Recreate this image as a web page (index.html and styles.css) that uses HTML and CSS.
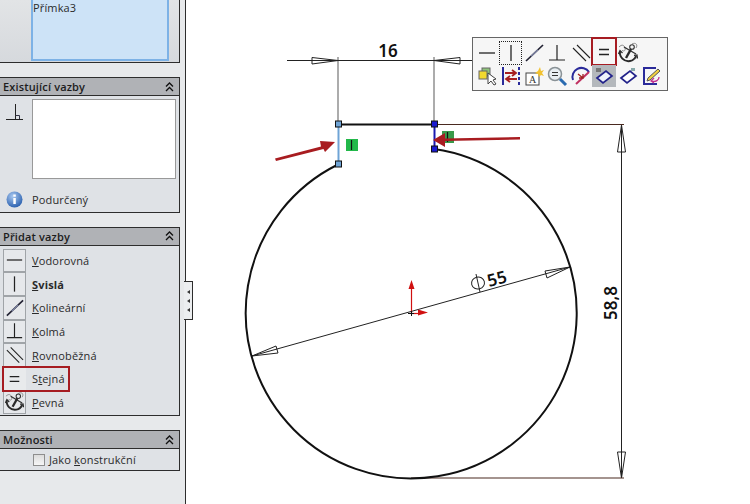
FILE: index.html
```html
<!DOCTYPE html>
<html lang="cs">
<head>
<meta charset="utf-8">
<title>Skica</title>
<link rel="stylesheet" href="styles.css">
</head>
<body>
<svg class="defs" width="0" height="0" aria-hidden="true">
  <symbol id="i-chev" viewBox="0 0 9 10"><path d="M1 4.500L4.500 1L8 4.500M1 9L4.500 5.500L8 9" fill="none" stroke="#111" stroke-width="1.300"/></symbol>
  <symbol id="i-h" viewBox="0 0 22 22"><path d="M3 11H19" stroke="#222" stroke-width="1.300" fill="none"/></symbol>
  <symbol id="i-v" viewBox="0 0 22 22"><path d="M11 3V19" stroke="#222" stroke-width="1.300" fill="none"/></symbol>
  <symbol id="i-c" viewBox="0 0 22 22"><path d="M3 19L20 3" stroke="#223" stroke-width="1.700" fill="none"/><path d="M8 14.300L15 7.700" stroke="#7f86a8" stroke-width="1.200" fill="none"/></symbol>
  <symbol id="i-p" viewBox="0 0 22 22"><path d="M11 3V18M3 18H19" stroke="#222" stroke-width="1.200" fill="none"/></symbol>
  <symbol id="i-l" viewBox="0 0 22 22"><path d="M3 6L16 19M7 3L20 16" stroke="#222" stroke-width="1.100" fill="none"/></symbol>
  <symbol id="i-e" viewBox="0 0 22 22"><path d="M6 8.500H16M6 13.500H16" stroke="#222" stroke-width="1.500" fill="none"/></symbol>
  <symbol id="i-a" viewBox="0 0 22 22">
    <g fill="none">
      <path d="M2 5C5 2 7 3 8 6C9 9 6 10 5 8M15 2C19 0 21 3 19 6M17 13C20 12 21 16 18 17" stroke="#8a8a8a" stroke-width="1"/>
      <circle cx="15" cy="5" r="2.300" stroke="#333" stroke-width="1.100"/>
      <path d="M7 5L19 12" stroke="#333" stroke-width="1.400"/>
      <path d="M14 7L9 16" stroke="#2a2a2a" stroke-width="2.400"/>
      <path d="M3 9C2 15 7 20 13 19C16 18.500 18 16.500 19 14" stroke="#2a2a2a" stroke-width="2"/>
      <path d="M1.500 12L3 8.500L5.500 11M17 13.500L20 13L20.500 16.500" stroke="#2a2a2a" stroke-width="1.200"/>
    </g>
  </symbol>
</svg>
<div class="app">
  <aside class="side">
    <section class="sec sec-top">
      <div class="sel-list">Přímka3</div>
    </section>
    <section class="sec">
      <header class="sec-head"><span>Existující vazby</span><svg class="chev" width="9" height="10"><use href="#i-chev"/></svg></header>
      <div class="sec-body body-exist">
        <div class="exist-row">
          <svg class="exist-icon" width="18" height="18" viewBox="0 0 18 18"><path d="M9.500 0V15M0 15.500H17" stroke="#222" stroke-width="1" fill="none"/><path d="M9.500 11.500H13.500V15" stroke="#334" stroke-width="1" fill="none"/></svg>
          <div class="exist-box"></div>
        </div>
        <div class="status">
          <svg width="17" height="17" viewBox="0 0 17 17"><defs><radialGradient id="g" cx=".4" cy=".3" r=".8"><stop offset="0" stop-color="#a8c8f0"/><stop offset="1" stop-color="#1d55a8"/></radialGradient></defs><circle cx="8.500" cy="8.500" r="8" fill="url(#g)"/><rect x="7.300" y="7" width="2.500" height="6" fill="#fff"/><rect x="7.300" y="3.500" width="2.500" height="2.200" fill="#fff"/></svg>
          <span>Podurčený</span>
        </div>
      </div>
    </section>
    <section class="sec">
      <header class="sec-head"><span>Přidat vazby</span><svg class="chev" width="9" height="10"><use href="#i-chev"/></svg></header>
      <div class="sec-body body-add">
        <div class="rel"><span class="btn"><svg width="22" height="22"><use href="#i-h"/></svg></span><span><u>V</u>odorovná</span></div>
        <div class="rel rel-active"><span class="btn"><svg width="22" height="22"><use href="#i-v"/></svg></span><span><u>S</u>vislá</span></div>
        <div class="rel"><span class="btn"><svg width="22" height="22"><use href="#i-c"/></svg></span><span><u>K</u>olineární</span></div>
        <div class="rel"><span class="btn"><svg width="22" height="22"><use href="#i-p"/></svg></span><span><u>K</u>olmá</span></div>
        <div class="rel"><span class="btn"><svg width="22" height="22"><use href="#i-l"/></svg></span><span><u>R</u>ovnoběžná</span></div>
        <div class="rel rel-mark"><span class="btn"><svg width="22" height="22"><use href="#i-e"/></svg></span><span>S<u>t</u>ejná</span></div>
        <div class="rel"><span class="btn"><svg width="22" height="22"><use href="#i-a"/></svg></span><span><u>P</u>evná</span></div>
      </div>
    </section>
    <section class="sec">
      <header class="sec-head"><span>Možnosti</span><svg class="chev" width="9" height="10"><use href="#i-chev"/></svg></header>
      <div class="sec-body body-opt">
        <span class="check"></span><span>Jako <u>k</u>onstrukční</span>
      </div>
    </section>
    <div class="flip"><i></i><i></i><i></i></div>
  </aside>
  <main class="canvas">
    <svg class="sketch" viewBox="186 0 564 504" width="564" height="504">
      <g fill="none" stroke="#808080" stroke-width="1.300">
        <path d="M338 57V124M434 57V124"/>
      </g>
      <g fill="none" stroke="#222" stroke-width="1">
        <path d="M287 60.500H480"/>
        <path d="M312 57.500L338 60.500L312 64Z"/>
        <path d="M460 57.500L434 60.500L460 64Z"/>
        <path d="M621.500 125V478"/>
        <path d="M617.500 152L621.500 125L625.500 152Z"/>
        <path d="M617.500 452L621.500 478L625.500 452Z"/>
        <path d="M252 356L570 267"/>
        <path d="M276 346L252 356L278 353Z"/>
        <path d="M545 271L570 267L547 278Z"/>
        <ellipse cx="478" cy="283" rx="6.500" ry="6" transform="rotate(-15 478 283)"/>
        <path d="M476 274L480 292"/>
      </g>
      <path d="M434 124.500H624M411 478H624" fill="none" stroke="#4a2a20" stroke-width="1.200"/>
      <path d="M338 164.500A165.500 165.500 0 1 0 434 149" fill="none" stroke="#111" stroke-width="2"/>
      <path d="M338 124.500H434" fill="none" stroke="#111" stroke-width="2"/>
      <path d="M338.500 124V164" fill="none" stroke="#6fa4d6" stroke-width="2"/>
      <path d="M434.500 124V149" fill="none" stroke="#1a1ab0" stroke-width="2"/>
      <g stroke="#111" stroke-width="1">
        <rect x="335.500" y="121" width="6" height="6" fill="#6fa4d6"/>
        <rect x="335.500" y="161" width="6" height="6" fill="#6fa4d6"/>
        <rect x="431.500" y="121" width="6" height="6" fill="#1a1ad0"/>
        <rect x="431.500" y="146" width="6" height="6" fill="#1a1ad0"/>
      </g>
      <rect x="346" y="139" width="12" height="12" fill="#22b84a"/>
      <path d="M351.500 140V150" stroke="#111" stroke-width="1.200"/>
      <rect x="442" y="131" width="12" height="12" fill="#3a9a4a"/>
      <path d="M447.500 132V142" stroke="#111" stroke-width="1.200"/>
      <g fill="none" stroke="#d01010">
        <path d="M411.500 313V286" stroke-width="1.200"/>
        <path d="M411 313.500H420" stroke-width="1.200"/>
      </g>
      <path d="M411.500 280L408.500 289H414.500ZM428 312.500L418 309.500V315.500Z" fill="#d01010"/>
      <path d="M408 313.500H414M411.500 311V316" stroke="#111" stroke-width="1" fill="none"/>
      <g fill="#a81c20">
        <path d="M275 158.500L321 146.500L320 141L335 142L325 152L323.500 149L276 161Z"/>
        <path d="M520 137V139.500L445 141V147L433 140L445 133V138.500Z"/>
      </g>
      <text class="dim" x="388" y="57" text-anchor="middle">16</text>
      <text class="dim" transform="translate(489 287) rotate(-15)">55</text>
      <text class="dim" transform="translate(617 320) rotate(-90)">58,8</text>
    </svg>
    <div class="bar">
      <span class="tool"><svg width="22" height="22"><use href="#i-h"/></svg></span>
      <span class="tool tool-focus"><svg width="22" height="22"><use href="#i-v"/></svg></span>
      <span class="tool"><svg width="22" height="22"><use href="#i-c"/></svg></span>
      <span class="tool"><svg width="22" height="22"><use href="#i-p"/></svg></span>
      <span class="tool"><svg width="22" height="22"><use href="#i-l"/></svg></span>
      <span class="tool tool-mark"><svg width="22" height="22"><use href="#i-e"/></svg></span>
      <span class="tool"><svg width="22" height="22"><use href="#i-a"/></svg></span>
      <span class="tool"></span>
      <span class="tool"><svg width="22" height="22" viewBox="0 0 22 22"><rect x="6" y="3" width="8" height="8" fill="#8fc47a" stroke="#666"/><rect x="3" y="6" width="8" height="8" fill="#f2d92e" stroke="#666"/><path d="M12 8L12 19L15 16L18 20L20 19L17 15L20 14Z" fill="#fff" stroke="#444"/></svg></span>
      <span class="tool"><svg width="22" height="22" viewBox="0 0 22 22"><path d="M3 2V20" stroke="#2a2a9a" stroke-width="2"/><path d="M19 2V20" stroke="#2a2a9a" stroke-width="2" stroke-dasharray="3 2"/><path d="M5 8H15M12 5L16 8L12 11M17 14H7M10 11L6 14L10 17" stroke="#a82020" stroke-width="1.800" fill="none"/></svg></span>
      <span class="tool"><svg width="22" height="22" viewBox="0 0 22 22"><rect x="3" y="8" width="13" height="12" fill="#fff" stroke="#444"/><text class="tool-a" x="6" y="18">A</text><path d="M17 2L18 6L21 5L19 8L21 11L18 10L16 12L15 9L12 8L15 6Z" fill="#f2c230"/></svg></span>
      <span class="tool"><svg width="22" height="22" viewBox="0 0 22 22"><circle cx="9" cy="9" r="6.500" fill="#e8eef2" stroke="#8a9296" stroke-width="1.500"/><path d="M6 7.500H12M6 10.500H12" stroke="#333" stroke-width="1.200"/><path d="M14 14L20 20" stroke="#2a6ab0" stroke-width="3"/></svg></span>
      <span class="tool"><svg width="22" height="22" viewBox="0 0 22 22"><path d="M3 15A9 9 0 0 1 19 7" fill="none" stroke="#2a2a9a" stroke-width="2"/><path d="M6 19L19 7" stroke="#c03060" stroke-width="2"/><path d="M8 9L13 13M13 9V13H9" stroke="#a02020" stroke-width="1.300" fill="none"/></svg></span>
      <span class="tool tool-on"><svg width="22" height="22" viewBox="0 0 22 22"><path d="M4 13L13 6L19 11L10 18Z" fill="#eef2fa" stroke="#22228a" stroke-width="1.700"/><rect x="3" y="3" width="5" height="4" fill="#777"/></svg></span>
      <span class="tool"><svg width="22" height="22" viewBox="0 0 22 22"><path d="M4 13L13 6L19 11L10 18Z" fill="#fff" stroke="#22228a" stroke-width="1.700"/><rect x="14" y="3" width="4" height="3" fill="#8aa"/></svg></span>
      <span class="tool"><svg width="22" height="22" viewBox="0 0 22 22"><path d="M16 3H4V19H17" fill="none" stroke="#2a2a9a" stroke-width="2"/><path d="M8 13L18 4L20 6L10 15L7 16Z" fill="#f2d040" stroke="#555"/><path d="M19 12A5 4 0 0 1 12 16M14 13L11 16L14 18" fill="none" stroke="#c03090" stroke-width="1.300"/></svg></span>
    </div>
  </main>
</div>
</body>
</html>
```
FILE: styles.css
```css
html, body {
  margin: 0;
  padding: 0;
  width: 750px;
  height: 504px;
  overflow: hidden;
  background: #fff;
  font-family: "Open Sans", "Noto Sans", sans-serif;
  font-size: 11px;
  letter-spacing: 0.15px;
  color: #2a2a2a;
}
.defs { position: absolute; }
.app { display: flex; height: 504px; }
.side {
  position: relative;
  box-sizing: border-box;
  width: 186px;
  flex: none;
  height: 504px;
  background: #e7e9eb;
  border-right: 1.500px solid #2d2d2d;
  display: flex;
  flex-direction: column;
  gap: 14px;
}
.sec {
  width: 180px;
  box-sizing: border-box;
  border-right: 1.500px solid #2d2d2d;
  border-bottom: 1.500px solid #2d2d2d;
  background: #dfe2e6;
}
.sec-top {
  height: 63px;
  padding-left: 31px;
  background: linear-gradient(#e2e4e6, #d6d9dd);
}
.sel-list {
  box-sizing: border-box;
  width: 138px;
  height: 61px;
  padding: 0;
  background: #cde3f7;
  border: 2px solid #7db2e6;
  border-top: 0;
}
.sec-head {
  display: flex;
  justify-content: space-between;
  align-items: center;
  box-sizing: border-box;
  height: 19px;
  padding: 0 5px 0 3px;
  background: #b0b2b6;
  border-top: 1.500px solid #2d2d2d;
  border-bottom: 1.500px solid #2d2d2d;
  font-weight: 600;
  color: #1c1c1c;
}
.chev { flex: none; }
.body-exist { height: 115.500px; box-sizing: border-box; padding: 3px 3px 0 0; }
.exist-row { display: flex; align-items: flex-start; }
.exist-icon { margin: 5px 8px 0 6px; flex: none; }
.exist-box {
  box-sizing: border-box;
  width: 144px;
  height: 80px;
  background: #fff;
  border: 1px solid #999;
}
.status { display: flex; align-items: center; gap: 9px; padding: 12px 0 0 6px; }
.body-add { height: 169.500px; box-sizing: border-box; padding-top: 3px; }
.rel { display: flex; align-items: center; gap: 6px; height: 23.700px; }
.rel-active { font-weight: 700; }
.rel-mark { width: 66px; outline: 2px solid #a61c22; outline-offset: -1px; margin-left: 3px; }
.rel-mark .btn { margin-left: 0; }
.btn {
  box-sizing: border-box;
  width: 23px;
  height: 23.700px;
  margin-left: 3px;
  display: flex;
  align-items: center;
  justify-content: center;
  background: #e6e8eb;
  border: 1px solid #a0a4a8;
}
.rel-mark .btn { background: #e8eaec; border-color: transparent; }
.body-opt { display: flex; align-items: center; gap: 4px; height: 21px; padding-left: 33px; box-sizing: border-box; }
.check {
  box-sizing: border-box;
  width: 12px;
  height: 12px;
  background: linear-gradient(#dcdcdc, #f6f6f6);
  border: 1px solid #8e8e8e;
}
.flip {
  position: absolute;
  left: 184px;
  top: 281px;
  box-sizing: border-box;
  width: 9px;
  height: 39px;
  background: #eceef0;
  border: 1px solid #2d2d2d;
  border-left: 0;
  display: flex;
  flex-direction: column;
  justify-content: center;
  align-items: center;
  gap: 5px;
}
.flip i {
  width: 0;
  height: 0;
  border-top: 2.500px solid transparent;
  border-bottom: 2.500px solid transparent;
  border-right: 3px solid #333;
}
.canvas { position: relative; flex: 1; }
.sketch { display: block; }
.dim {
  font-family: "Noto Sans", sans-serif;
  font-size: 17px;
  font-weight: 600;
  letter-spacing: 0;
  fill: #111;
}
.tool-a { font-family: "Liberation Serif", serif; font-size: 10px; fill: #333; }
.bar {
  position: absolute;
  left: 286px;
  top: 37px;
  box-sizing: border-box;
  width: 196px;
  height: 54px;
  padding: 3px 0 0 2.500px;
  background: #f6f6f6;
  border: 1px solid #666;
  display: grid;
  grid-template-columns: repeat(8, 23.400px);
  grid-template-rows: 24px 22px;
  justify-content: start;
}
.tool {
  box-sizing: border-box;
  display: flex;
  align-items: center;
  justify-content: center;
}
.tool-focus { outline: 1px dotted #222; outline-offset: -1px; }
.tool-mark { margin-top: -3px; outline: 2px solid #a61c22; outline-offset: -1px; }
.tool-on { background: #b4b8bc; }
```
